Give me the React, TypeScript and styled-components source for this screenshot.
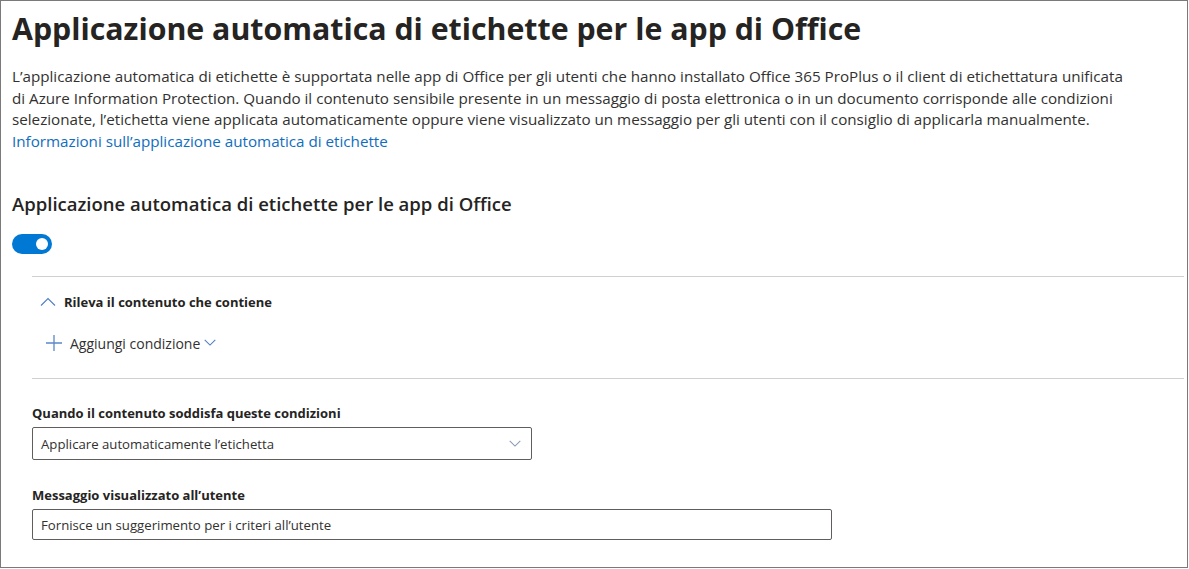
import React from "react";
import styled, { createGlobalStyle } from "styled-components";

const Global = createGlobalStyle`
  html, body { margin: 0; padding: 0; background: #ffffff; }
  body { font-family: "Open Sans", "Noto Sans", "Liberation Sans", sans-serif; color: #323130; }
  * { box-sizing: border-box; }
`;

const Frame = styled.div`
  width: 1188px;
  height: 568px;
  border: 1px solid #7a7a7a;
  padding: 8px 3px 0 11px;
  overflow: hidden;
  background: #fff;
`;

const Title = styled.h1`
  margin: 0;
  font-size: 30.3px;
  font-weight: 700;
  line-height: 40px;
  color: #252423;
`;

const Intro = styled.p`
  margin: 17px 0 0 0;
  font-size: 15.2px;
  line-height: 21.5px;
  color: #323130;
  width: 1122px;
`;

const Link = styled.a`
  color: #106ebe;
  text-decoration: none;
  display: block;
`;

const Subtitle = styled.h2`
  margin: 40px 0 0 0;
  font-size: 18.5px;
  font-weight: 600;
  line-height: 24px;
  color: #252423;
`;

const Toggle = styled.div`
  margin-top: 18px;
  width: 40px;
  height: 20px;
  border-radius: 10px;
  background: #0078d4;
  display: flex;
  align-items: center;
  justify-content: flex-end;
  padding-right: 4px;
`;

const Knob = styled.span`
  width: 12px;
  height: 12px;
  border-radius: 50%;
  background: #fff;
`;

const Section = styled.div`
  margin-left: 20px;
`;

const Divider = styled.div<{ $top: number }>`
  margin-top: ${(p) => p.$top}px;
  height: 1px;
  background: #d2d0ce;
`;

const CollapseRow = styled.div`
  margin-top: 14px;
  display: flex;
  align-items: center;
  gap: 8px;
  padding-left: 8px;
  height: 22px;
  font-size: 13px;
  font-weight: 700;
  color: #252423;
`;

const AddRow = styled.div`
  margin-top: 19px;
  display: flex;
  align-items: center;
  padding-left: 14px;
  height: 22px;
  font-size: 14px;
  color: #323130;
`;

const AddLabel = styled.span`
  margin-left: 8px;
  margin-right: 4px;
`;

const Field = styled.div<{ $top: number }>`
  margin-top: ${(p) => p.$top}px;
  display: flex;
  flex-direction: column;
  gap: 5px;
`;

const Label = styled.label`
  font-size: 13px;
  font-weight: 700;
  line-height: 18px;
  color: #252423;
`;

const Box = styled.div<{ $w: number; $h: number }>`
  width: ${(p) => p.$w}px;
  height: ${(p) => p.$h}px;
  border: 1px solid #605e5c;
  border-radius: 2px;
  display: flex;
  align-items: center;
  justify-content: space-between;
  padding: 0 10px 0 8px;
  font-size: 13.2px;
  color: #323130;
`;

const ChevronUp = () => (
  <svg width="16" height="10" viewBox="0 0 16 10" fill="none">
    <path d="M1 8.5 L8 1.5 L15 8.5" stroke="#4f7fc4" strokeWidth="1.1" />
  </svg>
);

const ChevronDown = ({ color = "#4f7fc4", w = 12 }: { color?: string; w?: number }) => (
  <svg width={w} height={w * 0.6} viewBox="0 0 12 7" fill="none">
    <path d="M0.7 0.7 L6 6 L11.3 0.7" stroke={color} strokeWidth="1.1" />
  </svg>
);

const Plus = () => (
  <svg width="16" height="16" viewBox="0 0 16 16" fill="none">
    <path d="M8 0 V16 M0 8 H16" stroke="#5b87c9" strokeWidth="1.3" />
  </svg>
);

export default function App() {
  return (
    <>
      <Global />
      <Frame>
        <Title>Applicazione automatica di etichette per le app di Office</Title>
        <Intro>
          L’applicazione automatica di etichette è supportata nelle app di Office per gli utenti che hanno installato Office 365 ProPlus o il client di etichettatura unificata di Azure Information Protection. Quando il contenuto sensibile presente in un messaggio di posta elettronica o in un documento corrisponde alle condizioni selezionate, l’etichetta viene applicata automaticamente oppure viene visualizzato un messaggio per gli utenti con il consiglio di applicarla manualmente.
          <Link href="#">Informazioni sull’applicazione automatica di etichette</Link>
        </Intro>
        <Subtitle>Applicazione automatica di etichette per le app di Office</Subtitle>
        <Toggle>
          <Knob />
        </Toggle>
        <Section>
          <Divider $top={22} />
          <CollapseRow>
            <ChevronUp />
            <span>Rileva il contenuto che contiene</span>
          </CollapseRow>
          <AddRow>
            <Plus />
            <AddLabel>Aggiungi condizione</AddLabel>
            <ChevronDown />
          </AddRow>
          <Divider $top={24} />
          <Field $top={25}>
            <Label>Quando il contenuto soddisfa queste condizioni</Label>
            <Box $w={500} $h={33}>
              <span>Applicare automaticamente l’etichetta</span>
              <ChevronDown color="#8a9bb8" />
            </Box>
          </Field>
          <Field $top={26}>
            <Label>Messaggio visualizzato all’utente</Label>
            <Box $w={800} $h={31}>
              <span>Fornisce un suggerimento per i criteri all’utente</span>
            </Box>
          </Field>
        </Section>
      </Frame>
    </>
  );
}
